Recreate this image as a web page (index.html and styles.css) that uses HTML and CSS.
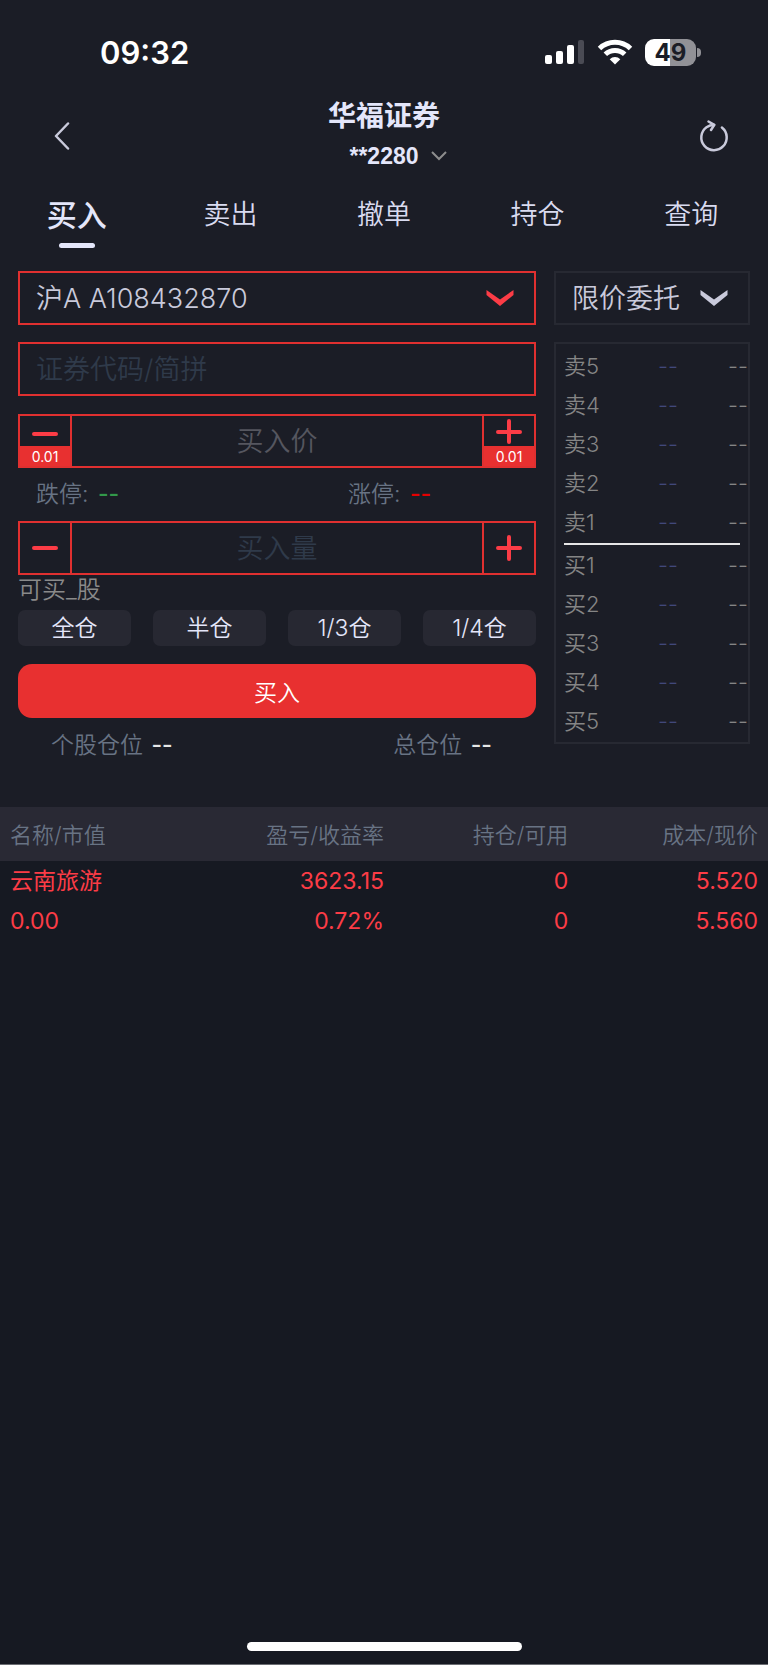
FILE: index.html
```html
<!DOCTYPE html>
<html lang="zh-CN">

<head>
    <meta charset="UTF-8">
    <meta name="viewport" content="width=device-width, initial-scale=1.0">
    <title>华福证券 - 买入</title>
    <link rel="stylesheet" href="styles.css">
</head>

<body>
    <div class="top">
        <div class="status-bar">
            <span class="time">09:32</span>
            <div class="status-icons">
                <svg width="40" height="26" viewBox="0 0 40 26" fill="#fff">
                    <rect x="0" y="16" width="7" height="9" rx="2" />
                    <rect x="11" y="12" width="7" height="13" rx="2" />
                    <rect x="22" y="6" width="7" height="19" rx="2" />
                    <rect x="33" y="1" width="6" height="24" rx="2" fill="#4a4b54" />
                </svg>
                <svg width="36" height="26" viewBox="0 0 36 26">
                    <path d="M2.500 9.500A22.500 22.500 0 0 1 33.500 9.500" fill="none" stroke="#fff" stroke-width="5" />
                    <path d="M8.300 15.300A14 14 0 0 1 27.700 15.300" fill="none" stroke="#fff" stroke-width="5" />
                    <path d="M18 25.500L12.700 20.200A7.500 7.500 0 0 1 23.300 20.200Z" fill="#fff" />
                </svg>
                <div class="battery">49</div>
            </div>
        </div>

        <header class="header">
            <button class="icon-btn" aria-label="返回">
                <svg width="16" height="28" viewBox="0 0 16 28" fill="none" stroke="#c9cadb" stroke-width="2.500"
                    stroke-linecap="round" stroke-linejoin="round">
                    <path d="M14 1.500L2 14L14 26.500" />
                </svg>
            </button>
            <div class="header-title">
                <h1>华福证券</h1>
                <button class="account">**2280
                    <svg width="16" height="10" viewBox="0 0 16 10" fill="none" stroke="#8d8d8d" stroke-width="2">
                        <path d="M1 1L8 8L15 1" />
                    </svg>
                </button>
            </div>
            <button class="icon-btn" aria-label="刷新">
                <svg width="30" height="32" viewBox="0 0 30 32" fill="none" stroke="#c9cadb" stroke-width="2.500"
                    stroke-linecap="round" stroke-linejoin="round">
                    <path d="M22.900 7.500A12.700 12.700 0 1 1 7.500 7.200C9.500 5.800 12 5 15 5" />
                    <path d="M9.500 1.500L15.300 4.800L12 10" />
                </svg>
            </button>
        </header>

        <nav class="tabs">
            <a href="#" class="active">买入</a>
            <a href="#">卖出</a>
            <a href="#">撤单</a>
            <a href="#">持仓</a>
            <a href="#">查询</a>
        </nav>

        <main class="trade">
            <div class="select-box red">
                <select aria-label="股东账户">
                    <option>沪A A108432870</option>
                </select>
                <svg width="28" height="18" viewBox="0 0 28 18" fill="#fc3c46">
                    <path d="M.500 1L14 10.500L27.500 1V6L14 17L.500 6Z" />
                </svg>
            </div>
            <div class="select-box">
                <select aria-label="委托方式">
                    <option>限价委托</option>
                </select>
                <svg width="28" height="18" viewBox="0 0 28 18" fill="#c9cadb">
                    <path d="M.500 1L14 10.500L27.500 1V6L14 17L.500 6Z" />
                </svg>
            </div>

            <form class="form">
                <input class="code" type="text" placeholder="证券代码/简拼" aria-label="证券代码">

                <div class="stepper price">
                    <button type="button" aria-label="减少价格">
                        <span class="icon"><svg width="26" height="26" viewBox="0 0 26 26">
                                <path d="M2 16H24" />
                            </svg></span>
                        <span class="step">0.01</span>
                    </button>
                    <input type="text" placeholder="买入价" aria-label="买入价">
                    <button type="button" aria-label="增加价格">
                        <span class="icon"><svg width="26" height="26" viewBox="0 0 26 26">
                                <path d="M2 14H24M13 3V24" />
                            </svg></span>
                        <span class="step">0.01</span>
                    </button>
                </div>

                <div class="limits">
                    <span>跌停: <b class="down">--</b></span>
                    <span>涨停: <b class="up">--</b></span>
                </div>

                <div class="stepper">
                    <button type="button" aria-label="减少数量">
                        <span class="icon"><svg width="26" height="26" viewBox="0 0 26 26">
                                <path d="M2 13H24" />
                            </svg></span>
                    </button>
                    <input type="text" placeholder="买入量" aria-label="买入量">
                    <button type="button" aria-label="增加数量">
                        <span class="icon"><svg width="26" height="26" viewBox="0 0 26 26">
                                <path d="M2 13H24M13 2V24" />
                            </svg></span>
                    </button>
                </div>

                <p class="available">可买_股</p>

                <div class="portions">
                    <button type="button">全仓</button>
                    <button type="button">半仓</button>
                    <button type="button">1/3仓</button>
                    <button type="button">1/4仓</button>
                </div>

                <button type="submit" class="buy">买入</button>

                <div class="positions">
                    <span>个股仓位 <b>--</b></span>
                    <span>总仓位 <b>--</b></span>
                </div>
            </form>

            <div class="quotes">
                <table>
                    <tr><th>卖5</th><td>--</td><td>--</td></tr>
                    <tr><th>卖4</th><td>--</td><td>--</td></tr>
                    <tr><th>卖3</th><td>--</td><td>--</td></tr>
                    <tr><th>卖2</th><td>--</td><td>--</td></tr>
                    <tr><th>卖1</th><td>--</td><td>--</td></tr>
                </table>
                <hr>
                <table>
                    <tr><th>买1</th><td>--</td><td>--</td></tr>
                    <tr><th>买2</th><td>--</td><td>--</td></tr>
                    <tr><th>买3</th><td>--</td><td>--</td></tr>
                    <tr><th>买4</th><td>--</td><td>--</td></tr>
                    <tr><th>买5</th><td>--</td><td>--</td></tr>
                </table>
            </div>
        </main>
    </div>

    <table class="holdings">
        <thead>
            <tr>
                <th>名称/市值</th>
                <th>盈亏/收益率</th>
                <th>持仓/可用</th>
                <th>成本/现价</th>
            </tr>
        </thead>
        <tbody>
            <tr>
                <td>云南旅游<br>0.00</td>
                <td>3623.15<br>0.72%</td>
                <td>0<br>0</td>
                <td>5.520<br>5.560</td>
            </tr>
        </tbody>
    </table>

    <div class="home-indicator"></div>
</body>

</html>
```
FILE: styles.css
```css
* {
    box-sizing: border-box;
}

body {
    margin: 0;
    min-height: 100vh;
    display: flex;
    flex-direction: column;
    background-color: #161922;
    color: #e4e6fa;
    font-family: Inter, "Noto Sans CJK SC", sans-serif;
    font-size: 23px;
    font-weight: 350;
    border-bottom: 1px solid #6b6d73;
}

button,
input,
select {
    font: inherit;
    color: inherit;
    background: none;
    border: none;
    border-radius: 0;
    padding: 0;
    margin: 0;
    outline: none;
}

button {
    cursor: pointer;
}

svg {
    display: block;
}

.top {
    background-color: #1b1d26;
}

/* 状态栏 */
.status-bar {
    display: flex;
    justify-content: space-between;
    align-items: center;
    height: 96px;
    padding: 8px 72px 0 100px;
}

.time {
    color: #fff;
    font-size: 31px;
    font-weight: 600;
}

.status-icons {
    display: flex;
    align-items: center;
    gap: 12px;
}

.battery {
    position: relative;
    width: 51px;
    height: 27px;
    border-radius: 9px;
    background: linear-gradient(to right, #fff 50%, #919196 50%);
    color: #1b1d26;
    font-size: 24px;
    font-weight: 700;
    line-height: 27px;
    text-align: center;
}

.battery::after {
    content: "";
    position: absolute;
    left: 52px;
    top: 9px;
    width: 4px;
    height: 9px;
    border-radius: 0 4px 4px 0;
    background-color: #919196;
}

/* 标题 */
.header {
    display: grid;
    grid-template-columns: 1fr auto 1fr;
    align-items: center;
    height: 78px;
    padding: 0 27px;
}

.icon-btn {
    display: flex;
    justify-content: center;
    width: 70px;
}

.icon-btn:last-child {
    justify-self: end;
    width: 54px;
}

.header-title {
    display: flex;
    flex-direction: column;
    align-items: center;
}

.header-title h1 {
    margin: 0;
    font-size: 28px;
    font-weight: 700;
    line-height: 40px;
}

.account {
    display: flex;
    align-items: center;
    gap: 12px;
    padding-left: 28px;
    font-family: "Liberation Sans", Arial, sans-serif;
    font-size: 23px;
    font-weight: 700;
    line-height: 40px;
}

/* 导航 */
.tabs {
    display: flex;
    height: 84px;
    padding-top: 18px;
}

.tabs a {
    flex: 1;
    display: flex;
    flex-direction: column;
    align-items: center;
    color: #d9dbf0;
    font-size: 27px;
    line-height: 46px;
    text-decoration: none;
}

.tabs .active {
    color: #e4e6fa;
    font-size: 30px;
    font-weight: 500;
}

.tabs .active::after {
    content: "";
    width: 36px;
    height: 5px;
    margin-top: 5px;
    border-radius: 3px;
    background-color: #e4e6fa;
}

/* 交易区 */
.trade {
    display: grid;
    grid-template-columns: minmax(0, 518fr) minmax(0, 196fr);
    gap: 17px 18px;
    align-items: start;
    padding: 13px 18px 39px;
}

.select-box {
    display: grid;
    align-items: center;
    height: 54px;
    border: 2px solid #272932;
    color: #c9cadb;
}

.select-box.red {
    border-color: #e03030;
}

.select-box select {
    grid-area: 1 / 1;
    width: 100%;
    height: 50px;
    padding: 0 16px;
    appearance: none;
    font-size: 27px;
}

.select-box svg {
    grid-area: 1 / 1;
    justify-self: end;
    margin-right: 20px;
    pointer-events: none;
}

.form {
    display: flex;
    flex-direction: column;
}

.code {
    height: 54px;
    padding: 0 16px;
    border: 2px solid #e03030;
    font-size: 27px;
}

.code::placeholder,
.stepper input::placeholder {
    color: #2f3a4a;
    opacity: 1;
}

.stepper {
    display: flex;
    height: 54px;
    border: 2px solid #e03030;
}

.stepper.price {
    margin-top: 18px;
}

.stepper.price input::placeholder {
    color: #55565f;
}

.stepper input {
    flex: 1;
    min-width: 0;
    font-size: 27px;
    text-align: center;
}

.stepper button {
    display: flex;
    flex-direction: column;
    width: 52px;
}

.stepper button:first-child {
    border-right: 2px solid #e03030;
}

.stepper button:last-child {
    border-left: 2px solid #e03030;
}

.icon {
    flex: 1;
    display: flex;
    justify-content: center;
    align-items: center;
    width: 100%;
    min-height: 0;
}

.icon path {
    stroke: #fc3c46;
    stroke-width: 4;
    stroke-linecap: round;
}

.step {
    width: 100%;
    height: 20px;
    background-color: #e83030;
    color: #fff;
    font-size: 14px;
    font-weight: 400;
    line-height: 22px;
}

.limits {
    display: grid;
    grid-template-columns: 312px 1fr;
    padding-left: 18px;
    color: #687384;
    line-height: 53px;
}

.limits b {
    margin-left: 3px;
}

.limits .down {
    color: #32984a;
}

.limits .up {
    color: #e60000;
}

b {
    font-weight: 500;
}

.available {
    margin: 0;
    color: #8a8a8a;
    font-size: 24px;
    line-height: 30px;
}

.portions {
    display: grid;
    grid-template-columns: repeat(4, 1fr);
    gap: 22px;
    margin-top: 5px;
}

.portions button {
    height: 36px;
    border-radius: 7px;
    background-color: #272832;
    line-height: 36px;
}

.buy {
    height: 54px;
    margin-top: 18px;
    border-radius: 14px;
    background-color: #e83030;
    color: #fff;
}

.positions {
    display: flex;
    justify-content: space-between;
    padding: 5px 44px 0 33px;
    color: #687384;
    line-height: 45px;
}

.positions b {
    margin-left: 2px;
    color: #e6e6e6;
}

/* 五档盘口 */
.quotes {
    border: 2px solid #272932;
    padding: 3px 0 1px;
}

.quotes table {
    width: 100%;
    border-collapse: collapse;
    table-layout: fixed;
}

.quotes th,
.quotes td {
    height: 39px;
    padding: 0;
    color: #858585;
    font-size: 22px;
    font-weight: 350;
    line-height: 39px;
    text-align: right;
}

.quotes th {
    padding-left: 8px;
    text-align: left;
}

.quotes td:nth-child(2) {
    padding-right: 6px;
    color: #41487a;
}

.quotes hr {
    height: 2px;
    margin: 1px 8px;
    border: none;
    background-color: #e6e6e6;
}

/* 持仓列表 */
.holdings {
    width: 100%;
    border-collapse: collapse;
    table-layout: fixed;
    text-align: right;
}

.holdings th {
    height: 54px;
    padding: 0 0 2px;
    background-color: #292934;
    color: #687384;
    font-size: 22px;
    font-weight: 350;
}

.holdings th:nth-child(1) {
    width: 26%;
}

.holdings th:nth-child(2),
.holdings th:nth-child(3) {
    width: 24%;
}

.holdings td {
    padding: 0;
    color: #fc3c46;
    font-weight: 400;
    line-height: 40px;
}

.holdings th:first-child,
.holdings td:first-child {
    padding-left: 10px;
    text-align: left;
}

.holdings th:last-child,
.holdings td:last-child {
    padding-right: 10px;
}

.home-indicator {
    width: 275px;
    height: 9px;
    margin: auto auto 13px;
    border-radius: 5px;
    background-color: #fff;
}
```
